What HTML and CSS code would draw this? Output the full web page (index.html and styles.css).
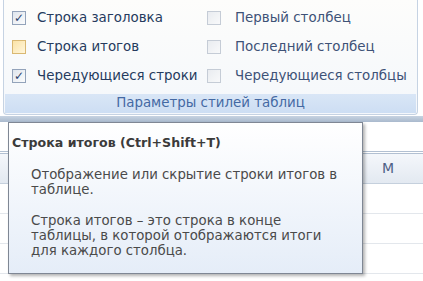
FILE: index.html
```html
<!DOCTYPE html>
<html lang="ru">
<head>
  <meta charset="UTF-8" />
  <title>Параметры стилей таблиц</title>
  <link rel="stylesheet" href="styles.css">
</head>
<body>
  <div class="ribbon">
    <div class="opts">
      <label class="opt"><span class="box checked">&#10003;</span>Строка заголовка</label>
      <label class="opt off"><span class="box"></span>Первый столбец</label>
      <label class="opt"><span class="box hot"></span>Строка итогов</label>
      <label class="opt off"><span class="box"></span>Последний столбец</label>
      <label class="opt"><span class="box checked">&#10003;</span>Чередующиеся строки</label>
      <label class="opt off"><span class="box"></span>Чередующиеся столбцы</label>
    </div>
    <div class="group-label">Параметры стилей таблиц</div>
  </div>
  <div class="ribbon-edge"></div>

  <div class="sheet">
    <div class="formula"></div>
    <div class="col-head"><span class="col-m">M</span></div>
    <div class="row"></div>
    <div class="row"></div>
    <div class="row"></div>
  </div>

  <div class="tooltip">
    <div class="tip-title">Строка итогов (Ctrl+Shift+T)</div>
    <p>Отображение или скрытие строки итогов в таблице.</p>
    <p>Строка итогов – это строка в конце таблицы, в которой отображаются итоги для каждого столбца.</p>
  </div>
</body>
</html>
```

FILE: styles.css
```css
*, *::before, *::after {
  box-sizing: border-box;
}
body {
  margin: 0;
  width: 423px;
  height: 281px;
  overflow: hidden;
  background: #fff;
  font-family: 'DejaVu Sans', 'Open Sans', sans-serif;
  position: relative;
}
.ribbon {
  margin: 0 5px 0 3px;
  height: 115px;
  border: 1px solid #c6d3e3;
  border-top: none;
  border-radius: 0 0 4px 4px;
  background: linear-gradient(#fdfdfb, #f4f7fb);
  display: flex;
  flex-direction: column;
}
.opts {
  flex: 1;
  display: grid;
  grid-template-columns: 195px 1fr;
  grid-auto-rows: 29px;
  padding: 3px 0 0 8px;
}
.opt {
  display: flex;
  align-items: center;
  gap: 11px;
  font-size: 13.4px;
  color: #263b5e;
  white-space: nowrap;
}
.opt.off {
  color: #3e5277;
  gap: 14px;
}
.box {
  width: 14px;
  height: 14px;
  border: 1px solid #93a3ba;
  background: linear-gradient(135deg, #dfe5ec, #fbfcfd);
  display: flex;
  align-items: center;
  justify-content: center;
  font-size: 12px;
  font-weight: 700;
  color: #2b3f6b;
  line-height: 1;
}
.box.hot {
  border-color: #d9b872;
  background: linear-gradient(135deg, #fbe3a6, #fff6dc);
}
.opt.off .box {
  border-color: #c5ccd6;
  background: linear-gradient(135deg, #e9ecf0, #f8f9fa);
}
.group-label {
  height: 19px;
  margin: 0 1px 1px;
  background: linear-gradient(#d9e6f6, #cddef3);
  color: #4469a3;
  font-size: 13.4px;
  text-align: center;
  line-height: 18px;
}
.ribbon-edge {
  height: 6px;
  margin-top: 1px;
  background: linear-gradient(#c7d3e1, #a9b9cd);
}
.formula {
  height: 32px;
  border-bottom: 3px double #b2c0d2;
}
.col-head {
  height: 30px;
  background: linear-gradient(#f4f7fb, #e3e9f1);
  border-bottom: 1px solid #c5d0dd;
  position: relative;
}
.col-m {
  position: absolute;
  left: 382px;
  top: 6px;
  font-size: 14px;
  color: #4e6186;
}
.row {
  height: 30px;
  border-bottom: 1px solid #e3e7ec;
}
.tooltip {
  position: absolute;
  left: 8px;
  top: 122px;
  width: 355px;
  height: 152px;
  border: 1px solid #7f8794;
  background: linear-gradient(#ffffff, #e5edf8);
  box-shadow: 2px 2px 3px rgba(0, 0, 0, 0.3);
  padding: 12px 14px 0 3px;
  color: #4a4a4a;
  font-size: 13.3px;
  line-height: 15px;
}
.tip-title {
  font-weight: 700;
  font-size: 12.6px;
  color: #3b3b3b;
  margin-bottom: 17px;
}
.tooltip p {
  margin: 0 0 16px 19px;
}
```
